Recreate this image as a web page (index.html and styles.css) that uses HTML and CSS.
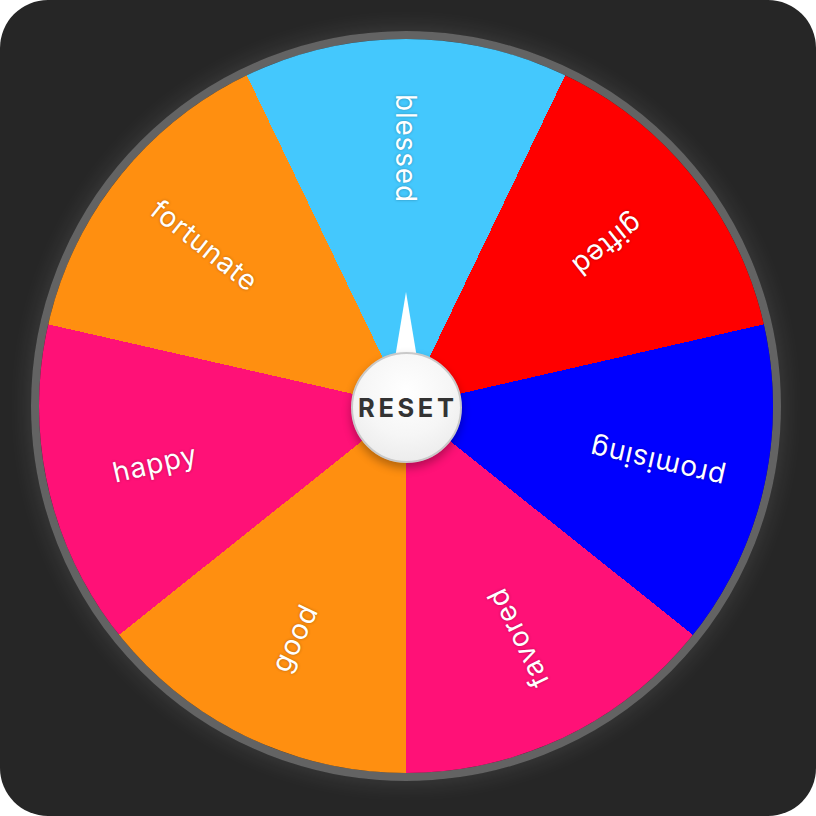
FILE: index.html
```html
<!DOCTYPE html>
<html lang="en">
<head>
<meta charset="utf-8">
<title>Wheel</title>
<link rel="stylesheet" href="styles.css">
</head>
<body>
<div class="card">
  <div class="wheel">
    <div class="disc">
      <div class="label l1">blessed</div>
      <div class="label l2">gifted</div>
      <div class="label l3">promising</div>
      <div class="label l4">favored</div>
      <div class="label l5">good</div>
      <div class="label l6">happy</div>
      <div class="label l7">fortunate</div>
    </div>
    <svg class="pointer" width="22" height="66" viewBox="0 0 22 66"><polygon points="11,0 22,66 0,66" fill="#ffffff"/></svg>
    <button class="reset">RESET</button>
  </div>
</div>
</body>
</html>
```
FILE: styles.css
```css
html, body {
  margin: 0;
  padding: 0;
  background: #ffffff;
}
.card {
  width: 816px;
  height: 816px;
  background: #262626;
  border-radius: 48px;
  box-sizing: border-box;
  padding: 31px 35px 35px 31px;
}
.wheel {
  position: relative;
  width: 750px;
  height: 750px;
  border-radius: 50%;
  box-sizing: border-box;
  border: 8.5px solid #636363;
  box-shadow: 0 0 26px rgba(255, 255, 255, 0.13);
}
.disc {
  position: relative;
  width: 100%;
  height: 100%;
  border-radius: 50%;
  overflow: hidden;
  background: conic-gradient(from -25.714deg,
    #44c8fd 0deg 51.43deg,
    #ff0000 51.43deg 102.86deg,
    #0000ff 102.86deg 154.29deg,
    #ff1177 154.29deg 205.71deg,
    #ff8f10 205.71deg 257.14deg,
    #ff1177 257.14deg 308.57deg,
    #ff8f10 308.57deg 360deg);
}
.label {
  position: absolute;
  left: calc(50% - 366px);
  top: calc(50% - 20px);
  width: 216px;
  padding-right: 150px;
  height: 40px;
  line-height: 40px;
  text-align: center;
  transform-origin: 100% 50%;
  font-family: Inter, Roboto, "Liberation Sans", Arial, sans-serif;
  font-size: 28px;
  letter-spacing: 0.8px;
  text-indent: 0.8px;
  color: #ffffff;
  text-shadow: 0 0 3px rgba(0, 0, 0, 0.3);
  white-space: nowrap;
}
.l1 { transform: rotate(90deg); }
.l2 { transform: rotate(141.43deg); }
.l3 { transform: rotate(192.86deg); }
.l4 { transform: rotate(244.29deg); }
.l5 { transform: rotate(295.71deg); }
.l6 { transform: rotate(347.14deg); }
.l7 { transform: rotate(38.57deg); }
.pointer {
  position: absolute;
  left: calc(50% - 11px);
  top: 253px;
  display: block;
}
.reset {
  position: absolute;
  left: calc(50% - 55.5px);
  top: calc(50% - 54px);
  width: 111px;
  height: 111px;
  border-radius: 50%;
  box-sizing: border-box;
  border: 2.5px solid #c9c9c9;
  background: radial-gradient(circle at 50% 35%, #ffffff 0%, #f6f6f6 50%, #e6e6e6 100%);
  box-shadow: 0 5px 10px rgba(0, 0, 0, 0.3);
  font-family: Inter, "Liberation Sans", Arial, sans-serif;
  font-weight: bold;
  font-size: 25.5px;
  letter-spacing: 3.6px;
  padding: 0 0 0 3.6px;
  color: #333333;
  cursor: pointer;
}
```
